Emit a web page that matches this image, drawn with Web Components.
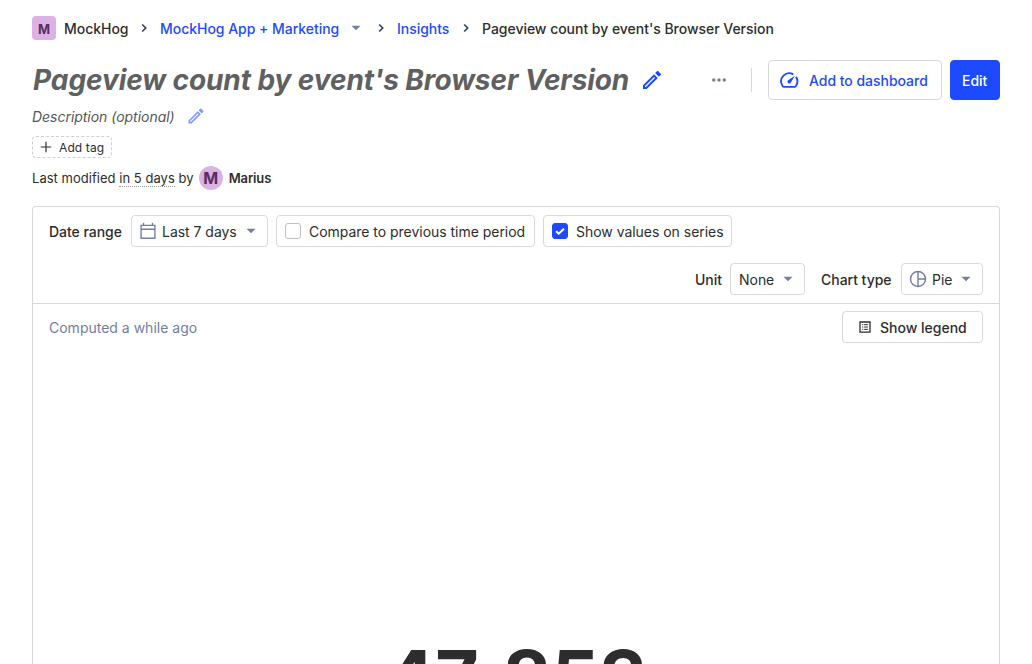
<!DOCTYPE html>
<html lang="en">
<head>
<meta charset="utf-8">
<title>Pageview count by event's Browser Version</title>
<style>
html,body{margin:0;height:664px;overflow:hidden;background:#fff}
body{font:14px/20px Inter,"Liberation Sans",sans-serif;color:#2d2d2d;letter-spacing:-.03px}
</style>
</head>
<body>
<insight-page></insight-page>
<script>
const define = (name, css, html) => customElements.define(name, class extends HTMLElement {
  constructor() {
    super();
    this.attachShadow({mode: 'open'}).innerHTML = `<style>*{box-sizing:border-box}:host{box-sizing:border-box}${css}</style>${html}`;
  }
});

const ICONS = {
  chevron: '<path d="M9.3 6.7 14.6 12l-5.3 5.3" fill="none" stroke="#35416b" stroke-width="2.5"/>',
  caret: '<path d="M6 9h12l-6 6z" fill="currentColor"/>',
  pencil: '<path d="M14.06 9.02l.92.92L5.92 19H5v-.92l9.06-9.06M17.66 3c-.25 0-.51.1-.7.29l-1.83 1.83 3.75 3.75 1.83-1.83a1 1 0 0 0 0-1.41l-2.34-2.34c-.2-.2-.45-.29-.71-.29m-3.6 3.19L3 17.25V21h3.75L17.81 9.94l-3.75-3.75z" fill="currentColor"/>',
  dots: '<circle cx="5" cy="12" r="2.3" fill="currentColor"/><circle cx="12" cy="12" r="2.3" fill="currentColor"/><circle cx="19" cy="12" r="2.3" fill="currentColor"/>',
  gauge: '<path d="M16.7 5.9A8.8 8.8 0 0 0 4.7 18Q5.3 19.5 6.2 19.5H18.4Q19.3 19.5 19.9 18A8.8 8.8 0 0 0 19.6 8.6" fill="none" stroke="currentColor" stroke-width="2"/><path d="M18.4 7.4 14 14.6A1.9 1.9 0 1 1 11 12.4z" fill="currentColor"/>',
  plus: '<path d="M12 3v18M3 12h18" fill="none" stroke="currentColor" stroke-width="2"/>',
  calendar: '<path d="M2.8 4.4h18.4v17.2H2.8zM2.8 9.6h18.4M6 1v3.4M18 1v3.4" fill="none" stroke="currentColor" stroke-width="1.8"/>',
  pie: '<circle cx="12" cy="12" r="10" fill="none" stroke="currentColor" stroke-width="1.9"/><path d="M12 2v20M12 12h10" fill="none" stroke="currentColor" stroke-width="1.9"/>',
  legend: '<path d="M3.4 3.4h17.2v17.2H3.4z" fill="none" stroke="currentColor" stroke-width="2.2"/><path d="M7 8h2M7 12h2M7 16h2M10.5 8H17M10.5 12H17M10.5 16H17" fill="none" stroke="currentColor" stroke-width="1.7"/>',
  check: '<path d="M4 12.5l5.5 5L20 7.5" fill="none" stroke="currentColor" stroke-width="4"/>'
};
customElements.define('ui-icon', class extends HTMLElement {
  constructor() {
    super();
    const s = this.getAttribute('size') || 18;
    this.attachShadow({mode: 'open'}).innerHTML = `<style>:host{display:block;flex:none;width:${s}px;height:${s}px}svg{display:block}</style><svg width="${s}" height="${s}" viewBox="0 0 24 24">${ICONS[this.getAttribute('name')]}</svg>`;
  }
});

define('letter-mark',
  `:host{display:flex;flex:none;width:24px;height:24px;align-items:center;justify-content:center;background:#dcb1e3;color:#572e5e;border-radius:4px;font-weight:700;font-size:13px;line-height:24px;padding-top:1px}
   :host([round]){border-radius:50%;font-size:16px}`, '<slot></slot>');

define('ui-box',
  `:host{display:flex;flex:none;align-items:center;height:32px;border:1px solid #d9d9d9;border-radius:4px;padding:2px 8px 0;white-space:nowrap}
   ::slotted(*){margin-bottom:2px}
   :host([strong]){font-weight:500}
   :host([large]){height:40px;color:#1d4aff;font-weight:500}
   :host([primary]){background:#1d4aff;border-color:#1d4aff;color:#fff}`, '<slot></slot>');

define('check-mark',
  `:host{display:block;flex:none;width:16px;height:16px;border:1px solid #bfbfbf;border-radius:3px;color:#fff;margin-right:8px}
   ui-icon{display:none}
   :host([checked]){background:#1d4aff;border-color:#1d4aff}
   :host([checked]) ui-icon{display:block;margin:1px}`, '<ui-icon name="check" size="12"></ui-icon>');

define('bread-crumbs',
  `:host{display:flex;align-items:center;height:56px;gap:8px;font-weight:500;white-space:nowrap}
   a{color:#1d4aff} .c{color:#747ea2;margin:0 0 0 -1px} a,span{padding-top:2px}`,
  `<letter-mark>M</letter-mark><span style="width:64px">MockHog</span><ui-icon name="chevron" size="16"></ui-icon>
   <a style="width:180px">MockHog App + Marketing</a><ui-icon class="c" name="caret" size="18"></ui-icon><ui-icon name="chevron" size="16"></ui-icon>
   <a style="width:53px">Insights</a><ui-icon name="chevron" size="16"></ui-icon><span>Pageview count by event's Browser Version</span>`);

define('page-header',
  `:host{display:block;padding-top:4px}
   .title{display:flex;align-items:center;height:40px}
   h1{margin:0 0 0 1px;font-size:28px;line-height:40px;font-style:italic;font-weight:700;color:#606060;white-space:nowrap;letter-spacing:-.08px}
   .actions{display:flex;align-items:center;margin-left:auto}
   .blue{color:#1d4aff}
   .rule{width:1px;height:24px;background:#d9d9d9;margin:0 16px 0 23px}
   .desc{display:flex;align-items:center;height:20px;margin-top:6px;gap:11px;font-style:italic;color:#575757}
   .desc ui-icon{color:#839bff} .desc span{padding-top:2px}
   .tag{display:flex;width:80px;height:22px;align-items:center;margin-top:10px;border:1px dashed #d0d0d0;border-radius:4px;padding-left:6px;gap:6px;font-size:12px;letter-spacing:.12px}
   .tag span{padding-top:1px}
   .mod{display:flex;align-items:center;height:24px;margin-top:8px;font-size:13px;white-space:pre;letter-spacing:.03px}
   u{text-decoration:none;border-bottom:1px dotted #999;line-height:15px}
   b{font-weight:600;margin-left:6px;letter-spacing:-.1px}letter-mark{margin-left:5px}`,
  `<div class="title"><h1>Pageview count by event's Browser Version</h1><ui-icon class="blue" name="pencil" size="24" style="margin-left:11px"></ui-icon>
   <div class="actions"><ui-icon name="dots" size="18" style="color:#747ea2"></ui-icon><div class="rule"></div>
   <ui-box large style="width:174px;padding-left:9px;padding-right:0"><ui-icon name="gauge" size="22" style="margin-right:9px"></ui-icon>Add to dashboard</ui-box>
   <ui-box large primary style="margin-left:8px;width:50px;padding-left:11px;padding-right:0">Edit</ui-box></div></div>
   <div class="desc"><span>Description (optional)</span><ui-icon name="pencil" size="20"></ui-icon></div>
   <div class="tag"><ui-icon name="plus" size="14"></ui-icon><span>Add tag</span></div>
   <div class="mod"><span>Last modified <u>in 5 days</u> by</span><letter-mark round style="padding:0">M</letter-mark><b>Marius</b></div>`);

define('insight-card',
  `:host{display:block;margin-top:16px;border:1px solid #d9d9d9;border-bottom:0;border-radius:4px 4px 0 0;height:458px;overflow:hidden}
   .filters{height:97px;border-bottom:1px solid #d9d9d9;padding:8px 16px}
   .row{display:flex;align-items:center;gap:8px;height:32px}
   .row+.row{margin-top:16px;justify-content:flex-end}
   strong{font-weight:500;padding-top:2px}
   .label{width:74px}
   .i{color:#747ea2}
   .meta{display:flex;align-items:center;justify-content:space-between;height:32px;margin:7px 16px 0;color:#747ea2}
   .meta span{padding-top:2px;letter-spacing:0}
   .meta ui-box{color:#2d2d2d;letter-spacing:0}
   .total{margin-top:285px;height:100px;text-align:center;font-size:75px;line-height:100px;font-weight:700;letter-spacing:-.1px}
   .total span{margin-right:8px}`,
  `<div class="filters"><div class="row"><strong class="label">Date range</strong>
   <ui-box style="width:137px;padding-left:7px;padding-right:0"><ui-icon class="i" name="calendar" size="18" style="margin-right:5px"></ui-icon>Last 7 days<ui-icon class="i" name="caret" size="18" style="margin-left:5px"></ui-icon></ui-box>
   <ui-box style="width:259px"><check-mark></check-mark>Compare to previous time period</ui-box>
   <ui-box style="width:189px"><check-mark checked></check-mark>Show values on series</ui-box></div>
   <div class="row"><strong>Unit</strong><ui-box style="width:75px;padding-right:0">None<ui-icon class="i" name="caret" size="18" style="margin-left:5px"></ui-icon></ui-box>
   <strong style="margin-left:8px;width:72px">Chart type</strong><ui-box style="width:82px;padding-left:7px;padding-right:0"><ui-icon class="i" name="pie" size="18" style="margin-right:5px"></ui-icon>Pie<ui-icon class="i" name="caret" size="18" style="margin-left:5px"></ui-icon></ui-box></div></div>
   <div class="meta"><span>Computed a while ago</span><ui-box strong style="width:141px;padding-left:15px;padding-right:0"><ui-icon name="legend" size="14" style="margin-right:8px"></ui-icon>Show legend</ui-box></div>
   <div class="total">47<span>,</span>853</div>`);

define('insight-page', ':host{display:block;padding:0 32px}', '<bread-crumbs></bread-crumbs><page-header></page-header><insight-card></insight-card>');
</script>
</body>
</html>
